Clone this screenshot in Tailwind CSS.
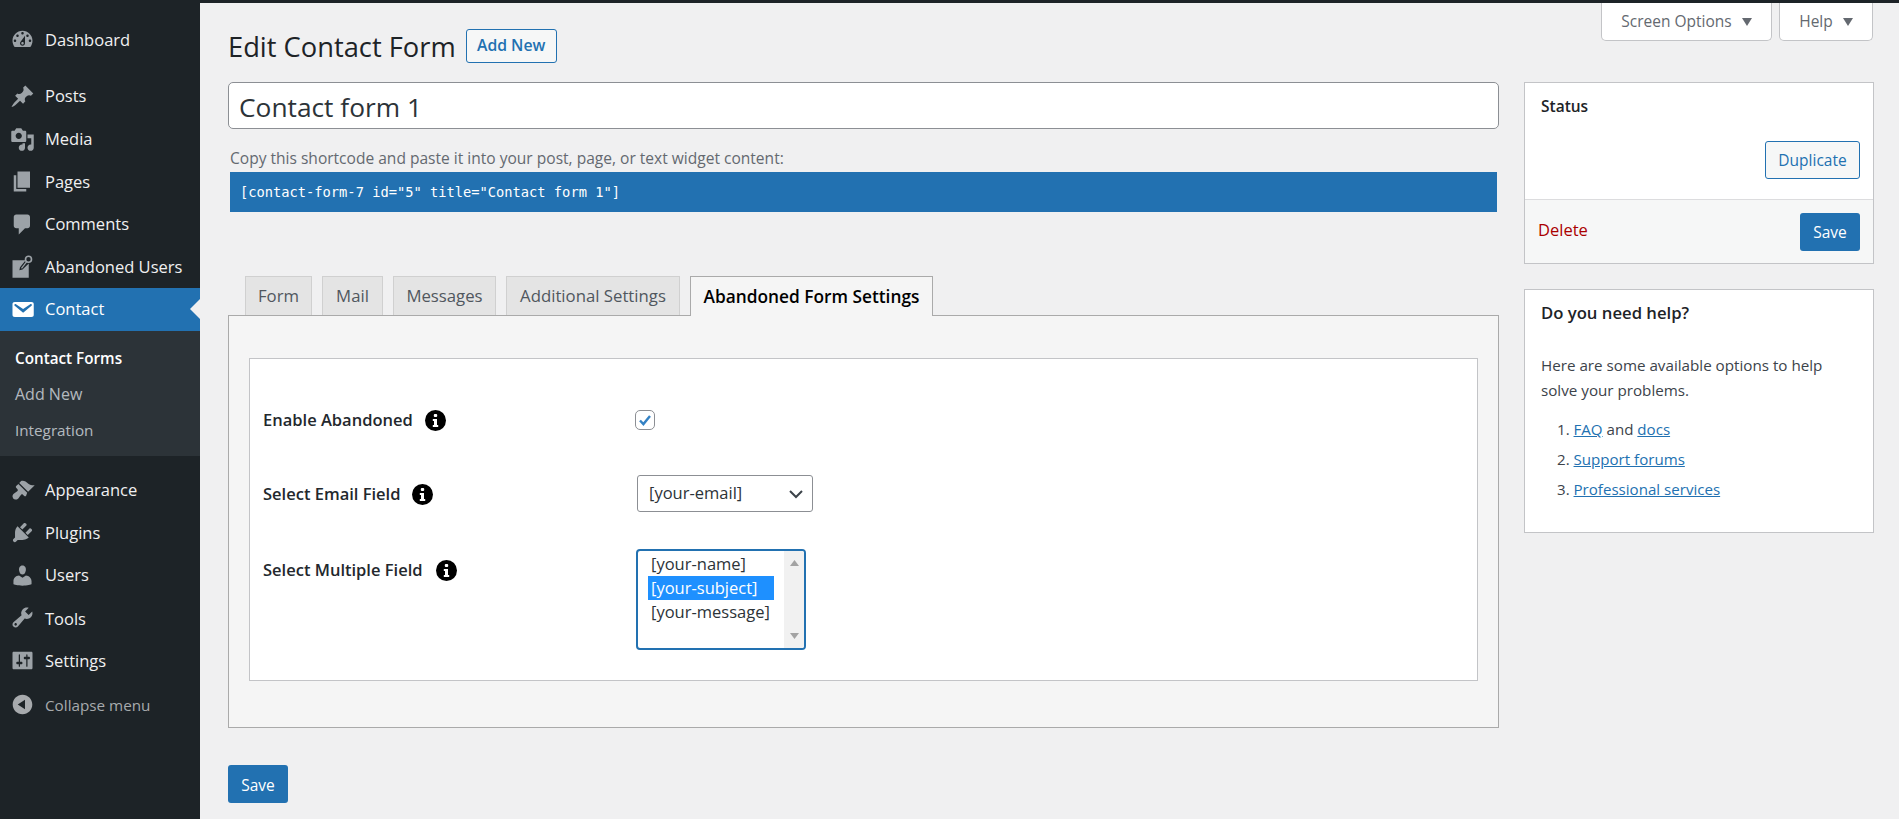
<!DOCTYPE html>
<html lang="en">
<head>
  <meta charset="UTF-8" />
  <title>Edit Contact Form</title>
  <script src="https://cdn.jsdelivr.net/npm/@tailwindcss/browser@4"></script>
</head>
<body class="bg-[#f0f0f1] text-[#3c434a] font-['Open_Sans','Noto_Sans',sans-serif] text-[15.5px] overflow-hidden">
  <div class="relative flex flex-col h-[819px] w-[1899px] overflow-hidden">
    <div class="h-[3px] bg-[#1d2327] shrink-0"></div>

    <!-- screen options tabs -->
    <div class="absolute top-[3px] right-[26px] flex gap-[7px] text-[#646970]">
      <div class="w-[171px] h-[38px] bg-white border border-t-0 border-[#c3c4c7] rounded-b-[5px] flex items-center justify-center gap-[10px]">
        <span>Screen Options</span>
        <svg class="w-[10px] h-[8px]" viewBox="0 0 10 8"><path d="M0 0h10L5 8z" fill="#646970"/></svg>
      </div>
      <div class="w-[94px] h-[38px] bg-white border border-t-0 border-[#c3c4c7] rounded-b-[5px] flex items-center justify-center gap-[10px]">
        <span>Help</span>
        <svg class="w-[10px] h-[8px]" viewBox="0 0 10 8"><path d="M0 0h10L5 8z" fill="#646970"/></svg>
      </div>
    </div>

    <div class="flex flex-1 min-h-0">
      <!-- admin menu -->
      <nav class="w-[200px] shrink-0 bg-[#1d2327] pt-[15px] text-[16.5px] text-[#f0f0f1]">
        <a class="flex items-center h-[42.5px] pl-[10px] gap-[10px]"><svg class="w-[25px] h-[25px] fill-[#9ca2a7]" viewBox="0 0 20 20"><path d="M3.76 16h12.48c1.1-1.37 1.76-3.11 1.76-5 0-4.42-3.58-8-8-8s-8 3.58-8 8c0 1.89.66 3.63 1.76 5zM10 4c.55 0 1 .45 1 1s-.45 1-1 1-1-.45-1-1 .45-1 1-1zM6 6c.55 0 1 .45 1 1s-.45 1-1 1-1-.45-1-1 .45-1 1-1zm8 0c.55 0 1 .45 1 1s-.45 1-1 1-1-.45-1-1 .45-1 1-1zm-5.37 5.55L12 7v6c0 1.1-.9 2-2 2s-2-.9-2-2c0-.57.24-1.08.63-1.45zM4 10c.55 0 1 .45 1 1s-.45 1-1 1-1-.45-1-1 .45-1 1-1zm12 0c.55 0 1 .45 1 1s-.45 1-1 1-1-.45-1-1 .45-1 1-1zm-5 3c0-.55-.45-1-1-1s-1 .45-1 1 .45 1 1 1 1-.45 1-1z"/></svg><span class="pt-[2px]">Dashboard</span></a>
        <div class="h-[15px]"></div>
        <a class="flex items-center h-[42.5px] pl-[10px] gap-[10px]"><svg class="w-[25px] h-[25px] fill-[#9ca2a7]" viewBox="0 0 20 20"><path d="M10.44 3.02l1.82-1.82 6.36 6.35-1.83 1.82c-1.05-.68-2.48-.57-3.41.36l-.75.75c-.92.93-1.04 2.35-.35 3.41l-1.83 1.82-2.41-2.41-2.8 2.79c-.42.42-3.38 2.71-3.8 2.29s1.86-3.39 2.28-3.81l2.79-2.79L4.1 9.36l1.83-1.82c1.05.69 2.48.57 3.4-.36l.75-.75c.93-.92 1.05-2.35.36-3.41z"/></svg><span>Posts</span></a>
        <a class="flex items-center h-[42.5px] pl-[10px] gap-[10px]"><svg class="w-[25px] h-[25px] fill-[#9ca2a7]" viewBox="0 0 20 20"><path d="M13 11V4c0-.55-.45-1-1-1h-1.67L9 1H5L3.67 3H2c-.55 0-1 .45-1 1v7c0 .55.45 1 1 1h10c.55 0 1-.45 1-1zM7 4.5c1.38 0 2.5 1.12 2.5 2.5S8.38 9.5 7 9.5 4.5 8.38 4.5 7 5.62 4.5 7 4.5zM14 6h5v10.5c0 1.38-1.12 2.5-2.5 2.5S14 17.88 14 16.5s1.12-2.5 2.5-2.5c.17 0 .34.02.5.05V9h-3V6zm-4 8.05V13h2v3.5c0 1.38-1.12 2.5-2.5 2.5S7 17.88 7 16.5 8.12 14 9.5 14c.17 0 .34.02.5.05z"/></svg><span>Media</span></a>
        <a class="flex items-center h-[42.5px] pl-[10px] gap-[10px]"><svg class="w-[25px] h-[25px] fill-[#9ca2a7]" viewBox="0 0 20 20"><path d="M6 15V2h10v13H6zm-1 1h8v2H3V5h2v11z"/></svg><span class="pt-[2px]">Pages</span></a>
        <a class="flex items-center h-[42.5px] pl-[10px] gap-[10px]"><svg class="w-[25px] h-[25px] fill-[#9ca2a7]" viewBox="0 0 20 20"><path d="M5 2h9c1.1 0 2 .9 2 2v7c0 1.1-.9 2-2 2h-2l-5 5v-5H5c-1.1 0-2-.9-2-2V4c0-1.1.9-2 2-2z"/></svg><span>Comments</span></a>
        <a class="flex items-center h-[42.5px] pl-[10px] gap-[10px]"><svg class="w-[25px] h-[25px] fill-[#9ca2a7]" viewBox="0 0 20 20"><path d="M2 5h10.5L8 10.500 7.500 13l2.500-.7L15 7.500V19H2z"/><path d="M9.200 11.500l4-5.200" stroke="#9ca2a7" stroke-width="1"/><circle cx="14.800" cy="4.200" r="2.400" fill="none" stroke="#9ca2a7" stroke-width="1.300"/></svg><span class="pt-[2px]">Abandoned Users</span></a>

        <a class="relative flex items-center h-[43px] pl-[10px] gap-[10px] bg-[#2271b1] text-white"><svg class="w-[25px] h-[25px] fill-white" viewBox="0 0 20 20"><path d="M3.87 4h13.25C18.37 4 19 4.59 19 5.79v8.42c0 1.19-.63 1.79-1.88 1.79H3.87c-1.25 0-1.88-.6-1.88-1.79V5.79c0-1.2.63-1.79 1.88-1.79zm6.62 8.6l6.74-5.53c.24-.2.43-.66.13-1.07-.29-.41-.82-.42-1.17-.17l-5.7 3.86L4.8 5.83c-.35-.25-.88-.24-1.17.17-.3.41-.11.87.13 1.07z"/></svg><span>Contact</span>
          <span class="absolute right-0 top-[11px] border-y-[10px] border-y-transparent border-r-[10px] border-r-[#f0f0f1]"></span>
        </a>
        <div class="bg-[#2c3338] py-[9px] text-[#f0f6fc]/70">
          <a class="flex items-center h-[35.5px] pl-[15px] pt-[2px] font-semibold text-white text-[15.25px]">Contact Forms</a>
          <a class="flex items-center h-[35.5px] pl-[15px] pt-[2px] text-[16px]">Add New</a>
          <a class="flex items-center h-[36px] pl-[15px] pt-[2px] text-[15.25px]">Integration</a>
        </div>
        <div class="h-[13px]"></div>

        <a class="flex items-center h-[42.5px] pl-[10px] gap-[10px]"><svg class="w-[25px] h-[25px] fill-[#9ca2a7]" viewBox="0 0 20 20"><path d="M14.48 11.06L7.41 3.99l1.5-1.5c.5-.56 2.3-.47 3.51.32 1.21.8 1.43 1.28 2.91 2.1 1.18.64 2.45 1.26 4.45.85zm-.71.71L6.7 4.7 4.93 6.47c-.39.39-.39 1.02 0 1.41l1.06 1.06c.39.39.39 1.03 0 1.42-.6.6-1.43 1.11-2.21 1.69-.35.26-.7.53-1.01.84-1.43 1.43-.44 3.2-.01 3.64.43.43 2.21 1.41 3.63-.01.32-.31.59-.66.84-1.01.58-.78 1.09-1.61 1.69-2.21.39-.39 1.03-.39 1.42 0l1.06 1.06c.39.39 1.02.39 1.41 0z"/></svg><span>Appearance</span></a>
        <a class="flex items-center h-[42.5px] pl-[10px] gap-[10px]"><svg class="w-[25px] h-[25px] fill-[#9ca2a7]" viewBox="0 0 20 20"><path d="M13.11 4.36L9.87 7.6 8 5.73l3.24-3.24c.35-.34 1.05-.2 1.56.32.52.51.66 1.21.31 1.55zm-8 1.77l.91-1.12 9.01 9.01-1.19.84c-.71.71-2.63 1.16-3.82 1.16H6.14L4.9 17.26c-.59.59-1.54.59-2.12 0-.59-.58-.59-1.53 0-2.12l1.24-1.24v-3.88c0-1.13.4-3.19 1.09-3.89zm7.26 3.97l3.24-3.24c.34-.35 1.04-.21 1.55.31.52.51.66 1.21.31 1.55l-3.24 3.25z"/></svg><span class="pt-[2px]">Plugins</span></a>
        <a class="flex items-center h-[42.5px] pl-[10px] gap-[10px]"><svg class="w-[25px] h-[25px] fill-[#9ca2a7]" viewBox="0 0 20 20"><path d="M10 9.25c-2.27 0-2.73-3.44-2.73-3.44C7 4.02 7.82 2 9.97 2c2.16 0 2.98 2.02 2.71 3.81 0 0-.41 3.44-2.68 3.44zm0 2.57L12.72 10c2.39 0 4.52 2.33 4.52 4.53v2.49s-3.65 1.13-7.24 1.13c-3.65 0-7.24-1.13-7.24-1.13v-2.49c0-2.25 1.94-4.48 4.47-4.48z"/></svg><span>Users</span></a>
        <a class="flex items-center h-[42.5px] pl-[10px] gap-[10px]"><svg class="w-[25px] h-[25px] fill-[#9ca2a7]" viewBox="0 0 20 20"><path d="M16.68 9.77c-1.34 1.34-3.3 1.67-4.95.99l-5.41 6.52c-.99.99-2.59.99-3.58 0s-.99-2.59 0-3.57l6.52-5.42c-.68-1.65-.35-3.61.99-4.95 1.28-1.28 3.12-1.62 4.72-1.06l-2.89 2.89 2.82 2.82 2.86-2.87c.53 1.58.18 3.39-1.08 4.65zM3.81 16.21c.4.39 1.04.39 1.43 0 .4-.4.4-1.04 0-1.43-.39-.4-1.03-.4-1.43 0-.39.39-.39 1.03 0 1.43z"/></svg><span class="pt-[3px]">Tools</span></a>
        <a class="flex items-center h-[42.5px] pl-[10px] gap-[10px]"><svg class="w-[25px] h-[25px] fill-[#9ca2a7]" viewBox="0 0 20 20"><path d="M18 16V4c0-.55-.45-1-1-1H3c-.55 0-1 .45-1 1v12c0 .55.45 1 1 1h14c.55 0 1-.45 1-1zM8 11h1c.55 0 1 .45 1 1s-.45 1-1 1H8v1.5c0 .28-.22.5-.5.5s-.5-.22-.5-.5V13H6c-.55 0-1-.45-1-1s.45-1 1-1h1V5.5c0-.28.22-.5.5-.5s.5.22.5.5V11zm5-2h-1c-.55 0-1-.45-1-1s.45-1 1-1h1V5.5c0-.28.22-.5.5-.5s.5.22.5.5V7h1c.55 0 1 .45 1 1s-.45 1-1 1h-1v5.5c0 .28-.22.5-.5.5s-.5-.22-.5-.5V9z"/></svg><span class="pt-[2px]">Settings</span></a>
        <a class="flex items-center h-[42px] mt-[2px] pl-[10px] gap-[10px] text-[15.25px] text-[#a7aaad]"><svg class="w-[25px] h-[25px] fill-[#a7aaad]" viewBox="0 0 20 20"><path d="M10 2.16c4.33 0 7.84 3.51 7.84 7.84s-3.51 7.84-7.84 7.84S2.16 14.33 2.16 10 5.71 2.16 10 2.16zm2 11.72V6.12L6.18 9.97z"/></svg><span class="pt-[2px]">Collapse menu</span></a>
      </nav>

      <!-- page content -->
      <main class="flex-1 min-w-0 pl-[28px] pr-[25px] pt-[26px]">
        <div class="flex items-center h-[34px] mb-[19px]">
          <h1 class="pt-[2px] text-[27.3px] text-[#1d2327] leading-none">Edit Contact Form</h1>
          <a class="ml-[10px] w-[91px] h-[34px] flex items-center justify-center border border-[#2271b1] rounded-[3px] bg-[#f6f7f7] text-[#2271b1] font-semibold text-[15.75px]">Add New</a>
        </div>

        <div class="flex gap-[25px]">
          <div class="w-[1271px] shrink-0">
            <input type="text" value="Contact form 1" class="block w-full h-[47px] px-[10px] pt-[2px] bg-white border border-[#8c8f94] rounded-[5px] text-[26.3px] text-[#2c3338]" />
            <p class="mt-[19px] ml-[2px] h-[20px] leading-[20px] text-[#646970] text-[15.55px]">Copy this shortcode and paste it into your post, page, or text widget content:</p>
            <div class="mt-[4px] mx-[2px] h-[40px] flex items-center px-[10px] bg-[#2271b1] text-white font-['DejaVu_Sans_Mono',monospace] text-[13.73px]">[contact-form-7 id="5" title="Contact form 1"]</div>

            <!-- tabs -->
            <div class="mt-[64px] pl-[17px] flex gap-[10px] h-[39px] text-[16.75px]">
              <div class="w-[67px] h-[39px] flex items-center justify-center bg-[#e4e4e4] border border-b-0 border-[#d0d0d0] text-[#50575e]">Form</div>
              <div class="w-[61px] h-[39px] flex items-center justify-center bg-[#e4e4e4] border border-b-0 border-[#d0d0d0] text-[#50575e]">Mail</div>
              <div class="w-[103px] h-[39px] flex items-center justify-center bg-[#e4e4e4] border border-b-0 border-[#d0d0d0] text-[#50575e]">Messages</div>
              <div class="w-[174px] h-[39px] flex items-center justify-center bg-[#e4e4e4] border border-b-0 border-[#d0d0d0] text-[#50575e]">Additional Settings</div>
              <div class="relative z-10 w-[243px] h-[40px] flex items-center justify-center bg-[#f5f5f5] border border-b-0 border-[#aaaaaa] text-black font-semibold text-[17.3px]">Abandoned Form Settings</div>
            </div>
            <div class="h-[413px] bg-[#f5f5f5] border border-[#aaaaaa] pt-[42px] px-[20px]">
              <div class="h-[323px] bg-white border border-[#c3c4c7] pl-[13px] pt-[51px] text-[16.5px] font-semibold text-[#23282d]">
                <div class="flex items-center h-[20px]">
                  <div class="w-[372px] flex items-center gap-[12px]">
                    <span>Enable Abandoned</span>
                    <svg class="w-[21px] h-[21px]" viewBox="0 0 21 21"><circle cx="10.5" cy="10.5" r="10.5" fill="#000"/><rect x="8.8" y="4" width="3.4" height="3" rx="1" fill="#fff"/><path d="M7.8 9h4.2v6h1.2v2H7.8v-2H9v-4H7.8z" fill="#fff"/></svg>
                  </div>
                  <span class="w-[20px] h-[20px] flex items-center justify-center bg-white border border-[#8c8f94] rounded-[5px]">
                    <svg class="w-[16px] h-[16px]" viewBox="0 0 16 16"><path d="M3 8.5l3.4 3.6L13 4" fill="none" stroke="#3582c4" stroke-width="2.4"/></svg>
                  </span>
                </div>

                <div class="flex items-center h-[37px] mt-[45px]">
                  <div class="w-[374px] pt-[2px] flex items-center gap-[12px]">
                    <span>Select Email Field</span>
                    <svg class="w-[21px] h-[21px]" viewBox="0 0 21 21"><circle cx="10.5" cy="10.5" r="10.5" fill="#000"/><rect x="8.8" y="4" width="3.4" height="3" rx="1" fill="#fff"/><path d="M7.8 9h4.2v6h1.2v2H7.8v-2H9v-4H7.8z" fill="#fff"/></svg>
                  </div>
                  <div class="w-[176px] h-[37px] flex items-center justify-between pl-[11px] pr-[8px] bg-white border border-[#8c8f94] rounded-[3px] font-normal text-[#2c3338]">
                    <span>[your-email]</span>
                    <svg class="w-[16px] h-[16px]" viewBox="0 0 16 16"><path d="M2 5l6 6 6-6" fill="none" stroke="#3c434a" stroke-width="2"/></svg>
                  </div>
                </div>

                <div class="flex items-start mt-[37px]">
                  <div class="w-[373px] h-[42px] flex items-center gap-[13px]">
                    <span>Select Multiple Field</span>
                    <svg class="w-[21px] h-[21px]" viewBox="0 0 21 21"><circle cx="10.5" cy="10.5" r="10.5" fill="#000"/><rect x="8.8" y="4" width="3.4" height="3" rx="1" fill="#fff"/><path d="M7.8 9h4.2v6h1.2v2H7.8v-2H9v-4H7.8z" fill="#fff"/></svg>
                  </div>
                  <div class="w-[170px] h-[101px] flex bg-white border-2 border-[#2271b1] rounded-[4px] font-normal text-[#2c3338] overflow-hidden">
                    <div class="flex-1 pl-[10px] pr-[10px] pt-[1px]">
                      <div class="h-[24px] leading-[24px] pl-[3px]">[your-name]</div>
                      <div class="h-[24px] leading-[24px] pl-[3px] bg-[#1e90ff] text-white">[your-subject]</div>
                      <div class="h-[24px] leading-[24px] pl-[3px]">[your-message]</div>
                    </div>
                    <div class="w-[20px] bg-[#f1f1f1] flex flex-col justify-between items-center py-[9px]">
                      <svg class="w-[9px] h-[6px]" viewBox="0 0 9 6"><path d="M0 6h9L4.500 0z" fill="#a3a3a3"/></svg>
                      <svg class="w-[9px] h-[6px]" viewBox="0 0 9 6"><path d="M0 0h9L4.500 6z" fill="#a3a3a3"/></svg>
                    </div>
                  </div>
                </div>
              </div>
            </div>
            <button class="block mt-[37px] w-[60px] h-[38px] pt-[3px] bg-[#2271b1] rounded-[3px] text-white">Save</button>
          </div>

          <!-- side boxes -->
          <aside class="w-[350px] shrink-0">
            <div class="h-[182px] bg-white border border-[#c3c4c7] flex flex-col">
              <div class="flex-1 px-[16px]">
                <h2 class="mt-[12px] h-[22px] leading-[22px] font-semibold text-[#1d2327]">Status</h2>
                <div class="flex justify-end mt-[24px] -mr-[3px]">
                  <a class="w-[95px] h-[38px] pt-[1px] flex items-center justify-center border border-[#2271b1] rounded-[3px] bg-[#f6f7f7] text-[#2271b1]">Duplicate</a>
                </div>
              </div>
              <div class="h-[64px] shrink-0 bg-[#f6f7f7] border-t border-[#dcdcde] flex items-center justify-between pl-[13px] pr-[13px]">
                <a class="text-[#aa0000] text-[16.5px] pb-[2px]">Delete</a>
                <button class="w-[60px] h-[38px] pt-[2px] bg-[#2271b1] rounded-[3px] text-white">Save</button>
              </div>
            </div>

            <div class="mt-[25px] h-[244px] bg-white border border-[#c3c4c7] px-[16px] pt-[12px]">
              <h2 class="h-[22px] leading-[22px] font-semibold text-[#1d2327] text-[16.7px]">Do you need help?</h2>
              <p class="mt-[29px] leading-[24.5px] text-[15.2px]">Here are some available options to help<br />solve your problems.</p>
              <ol class="mt-[12px] text-[15.1px] leading-[30px]">
                <li class="pl-[16px]">1. <a class="underline text-[#2271b1]">FAQ</a> and <a class="underline text-[#2271b1]">docs</a></li>
                <li class="pl-[16px]">2. <a class="underline text-[#2271b1]">Support forums</a></li>
                <li class="pl-[16px]">3. <a class="underline text-[#2271b1]">Professional services</a></li>
              </ol>
            </div>
          </aside>
        </div>
      </main>
    </div>
  </div>
</body>
</html>
